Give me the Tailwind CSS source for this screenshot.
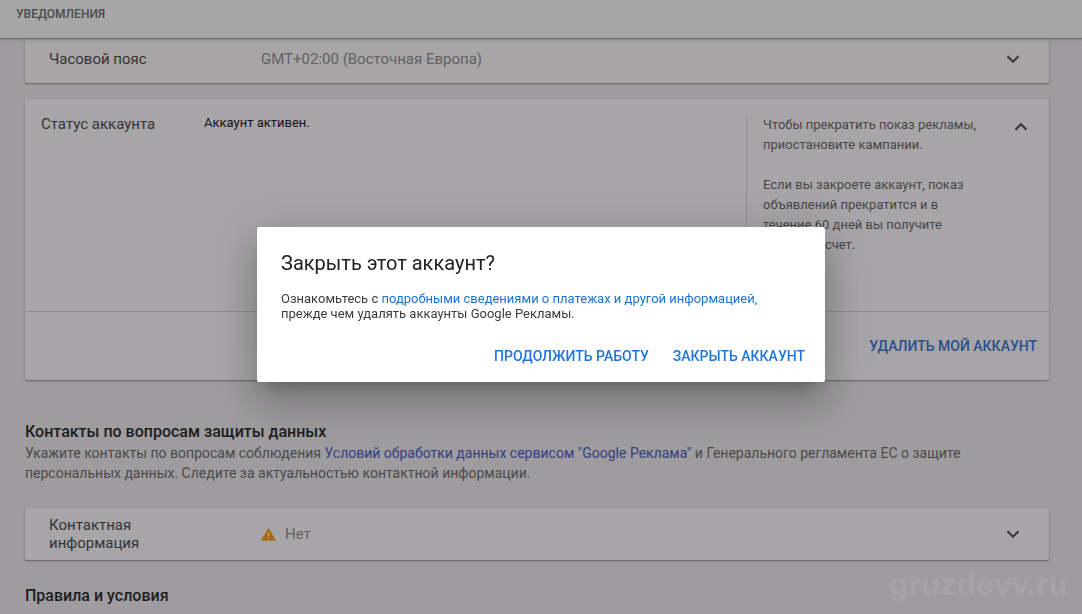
<!DOCTYPE html>
<html lang="ru">
<head>
<meta charset="utf-8">
<meta name="viewport" content="width=device-width, initial-scale=1">
<title>Закрыть этот аккаунт?</title>
<script src="https://cdn.jsdelivr.net/npm/@tailwindcss/browser@4"></script>
</head>
<body class="min-h-screen overflow-hidden bg-[#9e9c9e] font-['Roboto','Noto_Sans',sans-serif] text-[#343436]">
<header class="relative flex h-[38px] items-start bg-[#a6a6a6] px-4 pt-1 shadow-[0_1px_1px_#6d6d6d,0_2px_3px_#8a8a8a]">
  <h2 class="text-xs leading-5 font-medium text-[#4b4b4b]">УВЕДОМЛЕНИЯ</h2>
</header>

<main class="pr-[33px] pl-[25px]">
  <section class="flex h-[45px] items-center rounded-b-xs bg-[#a7a5a6] px-6 pb-1 shadow-[0_1px_1px_#6d6b6d,0_1px_3px_#848284]">
    <h3 class="w-[212px] shrink-0 text-[15px] leading-5">Часовой пояс</h3>
    <p class="grow text-[15px] leading-5 text-[#636163]">GMT+02:00 (Восточная Европа)</p>
    <button type="button" aria-label="Развернуть часовой пояс" class="flex size-6 items-center justify-center text-[#363436]">
      <svg class="size-6" viewBox="0 0 24 24" fill="none" stroke="currentColor" stroke-width="2"><path d="M6.500 9.200 12 14.700l5.500-5.500"/></svg>
    </button>
  </section>

  <section class="mt-4 rounded-xs bg-[#a7a5a7] shadow-[0_1px_1px_#6d6b6d,0_1px_3px_#848284]">
    <div class="flex h-[213px] border-b border-[#8f8d8f] p-4">
      <h3 class="w-[163px] shrink-0 text-[15px] leading-[18px]">Статус аккаунта</h3>
      <p class="grow text-[13px] leading-4 text-[#151416]">Аккаунт активен.</p>
      <div class="flex w-[287px] shrink-0 justify-between border-l border-[#8f8d8f] pl-4">
        <div class="w-[220px] text-[13px] leading-5 text-[#484648]">
          <p>Чтобы прекратить показ рекламы, приостановите кампании.</p>
          <p class="mt-5">Если вы закроете аккаунт, показ объявлений прекратится и в<br>течение 60 дней вы получите<br>итоговый счет.</p>
        </div>
        <button type="button" aria-label="Свернуть статус аккаунта" class="flex size-6 items-center justify-center text-[#363436]">
          <svg class="size-6" viewBox="0 0 24 24" fill="none" stroke="currentColor" stroke-width="2"><path d="M6.500 14.700 12 9.200l5.500 5.500"/></svg>
        </button>
      </div>
    </div>
    <div class="flex h-[68px] items-center justify-end pr-3">
      <button type="button" class="text-sm leading-5 font-medium text-[#2a4f8c]">УДАЛИТЬ МОЙ АККАУНТ</button>
    </div>
  </section>

  <h2 class="mt-[41px] text-base leading-[22px] font-medium text-[#1d1c1e]">Контакты по вопросам защиты данных</h2>
  <p class="text-sm leading-5 text-[#4b494b]">Укажите контакты по вопросам соблюдения <a href="#" class="text-[#343f82]">Условий обработки данных сервисом "Google Реклама"</a> и Генерального регламента ЕС о защите<br>персональных данных. Следите за актуальностью контактной информации.</p>

  <section class="mt-[25px] flex h-[52px] items-center rounded-xs bg-[#a7a5a7] px-6 shadow-[0_1px_1px_#6d6b6d,0_1px_3px_#848284]">
    <h3 class="w-[212px] shrink-0 text-[15px] leading-[18px]">Контактная<br>информация</h3>
    <div class="flex grow items-center gap-2">
      <svg class="h-[14px] w-4" viewBox="0 0 16 14"><path d="M7.500 1 15 13.500H0z" fill="#a8690f"/><path d="M7.500 5.500v3.500M7.500 10.300v1.500" stroke="#cbb08a" stroke-width="1.200"/></svg>
      <p class="text-[15px] leading-5 text-[#636163]">Нет</p>
    </div>
    <button type="button" aria-label="Развернуть контактную информацию" class="flex size-6 items-center justify-center text-[#363436]">
      <svg class="size-6" viewBox="0 0 24 24" fill="none" stroke="currentColor" stroke-width="2"><path d="M6.500 9.200 12 14.700l5.500-5.500"/></svg>
    </button>
  </section>

  <h2 class="mt-[25px] text-base leading-[22px] font-medium text-[#1d1c1e]">Правила и условия</h2>
</main>

<p class="fixed right-3.5 bottom-3 font-['Liberation_Sans',sans-serif] text-[32px] leading-9 font-bold text-[#a5a3a5]">gruzdevv.ru</p>

<div class="fixed inset-0 flex items-center justify-center pb-[5px]">
  <div role="dialog" aria-modal="true" aria-labelledby="dialog-title" class="w-[568px] max-w-full rounded-xs bg-white px-6 pt-6 pb-4 shadow-[0_11px_15px_-7px_rgba(0,0,0,0.2),0_24px_38px_3px_rgba(0,0,0,0.14),0_9px_46px_8px_rgba(0,0,0,0.12)]">
    <h1 id="dialog-title" class="text-xl leading-6 text-[#212124]">Закрыть этот аккаунт?</h1>
    <p class="mt-4 text-[13px] leading-[15px] text-[#3c3c40]">Ознакомьтесь с <a href="#" class="text-[#1a73d8]">подробными сведениями о платежах и другой информацией,</a><br>прежде чем удалять аккаунты Google Рекламы.</p>
    <div class="-mr-1 mt-[25px] flex justify-end gap-6 text-sm leading-5 font-medium text-[#1f75dc]">
      <button type="button">ПРОДОЛЖИТЬ РАБОТУ</button>
      <button type="button">ЗАКРЫТЬ АККАУНТ</button>
    </div>
  </div>
</div>
</body>
</html>
